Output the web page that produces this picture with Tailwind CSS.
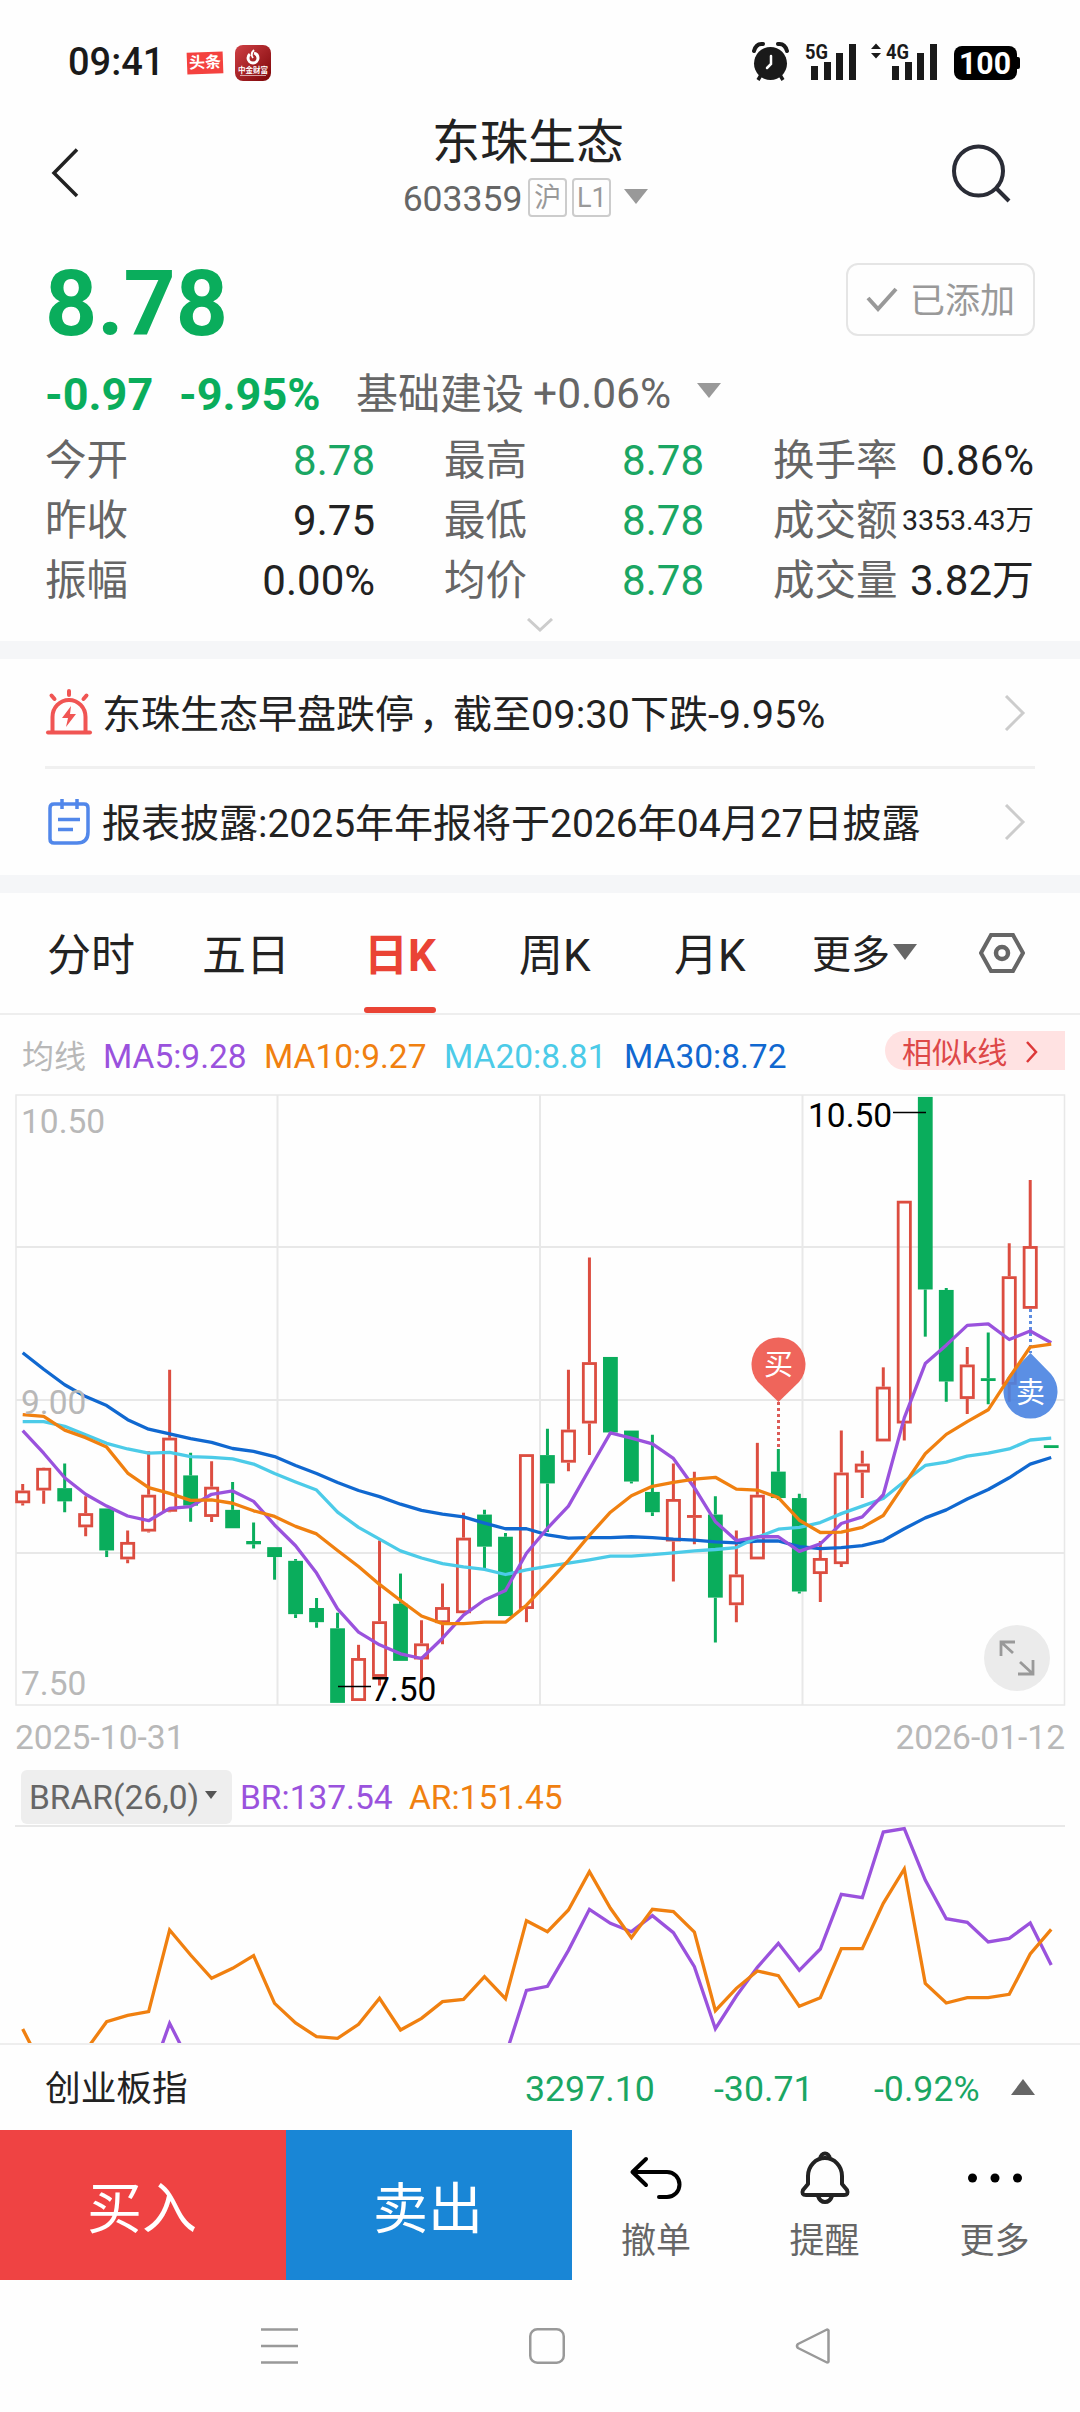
<!DOCTYPE html>
<html lang="zh-CN">
<head>
    <meta charset="UTF-8">
    <meta name="viewport" content="width=device-width, initial-scale=1.0">
    <title>东珠生态 603359</title>
    <script src="https://cdn.jsdelivr.net/npm/@tailwindcss/browser@4"></script>
</head>
<body class="bg-[#fefefe] font-['Roboto','Noto_Sans_CJK_SC',sans-serif] text-[#222]">
<div class="w-[1080px] h-[2412px] overflow-hidden flex flex-col whitespace-nowrap">

    <!-- Status bar -->
    <div class="h-[112px] shrink-0 pt-[14px] pl-[68px] pr-[60px] flex items-center justify-between">
        <div class="flex items-center">
            <span class="text-[38px] font-medium leading-none w-[119px] -mt-[2px] text-[#1a1a1a]">09:41</span>
            <span class="w-[36px] h-[22px] bg-[#f4423f] text-white text-[16px] font-bold leading-[22px] text-center -rotate-2">头条</span>
            <svg class="ml-[12px]" width="36" height="36" viewBox="0 0 36 36">
                <defs>
                    <linearGradient id="appBg" x1="0" y1="0" x2="1" y2="1">
                        <stop offset="0" stop-color="#d04045"/>
                        <stop offset="1" stop-color="#7c0508"/>
                    </linearGradient>
                </defs>
                <rect width="36" height="36" rx="8" fill="url(#appBg)"/>
                <circle cx="18" cy="13" r="5" fill="none" stroke="#fff" stroke-width="3" stroke-dasharray="27 4.400" stroke-dashoffset="-24"/>
                <path d="M19 5q-4 4-1 8" fill="none" stroke="#fff" stroke-width="1.800"/>
                <text x="18" y="27.500" font-size="7.500" font-weight="700" fill="#fff" text-anchor="middle">中金财富</text>
                <path d="M5 30.500h26" stroke="#fff" stroke-opacity=".6"/>
            </svg>
        </div>
        <svg width="270" height="44" viewBox="750 41 270 44" fill="#1a1a1a">
            <!-- alarm -->
            <circle cx="770.500" cy="63.500" r="16.500"/>
            <path d="M754 51q2-8 9-7M787 51q-2-8-9-7" fill="none" stroke="#1a1a1a" stroke-width="4" stroke-linecap="round"/>
            <path d="M761 75l-3 5M780 75l3 5" stroke="#1a1a1a" stroke-width="3.500"/>
            <path d="M771 56v8l-4 4" fill="none" stroke="#fff" stroke-width="2.500" stroke-linecap="round"/>
            <!-- signal -->
            <text x="805" y="59" font-size="21" font-weight="700" textLength="23" lengthAdjust="spacingAndGlyphs">5G</text>
            <path d="M811 66h7v14h-7zM824 62h7v18h-7zM836 53h7v27h-7zM849 44h7v36h-7z"/>
            <path d="M876 43.500l5 5.500h-10zM876 58.500l5-5.500h-10z"/>
            <text x="886" y="59" font-size="21" font-weight="700" textLength="23" lengthAdjust="spacingAndGlyphs">4G</text>
            <path d="M892 66h7v14h-7zM905 62h7v18h-7zM917 53h7v27h-7zM930 44h7v36h-7z"/>
            <!-- battery -->
            <rect x="954" y="46" width="63" height="34" rx="8" fill="#000"/>
            <rect x="1014" y="57" width="6" height="12" rx="2" fill="#000"/>
            <text x="985" y="74" font-size="31" font-weight="700" fill="#fff" text-anchor="middle" textLength="52" lengthAdjust="spacingAndGlyphs">100</text>
        </svg>
    </div>

    <!-- Title -->
    <div class="h-[112px] shrink-0 flex justify-between px-[46px]">
        <svg class="mt-[35px]" width="60" height="52" viewBox="46 147 60 52" fill="none" stroke="#222" stroke-width="3.500">
            <path d="M77 149.500L54 173l23 23"/>
        </svg>
        <div class="flex flex-col items-center pr-[5px]">
            <div class="text-[48px] leading-[60px] pl-[5px] pt-px">东珠生态</div>
            <div class="flex items-center h-[51px] text-[35.5px] text-[#666]">
                <span class="pt-[2px]">603359</span>
                <span class="ml-[6px] w-[39px] h-[39px] -mt-[2px] rounded border-2 border-[#ccc] text-[27px] leading-[36px] text-center text-[#999]">沪</span>
                <span class="ml-[5px] w-[39px] h-[39px] -mt-[2px] rounded border-2 border-[#ccc] text-[27px] leading-[36px] text-center text-[#999]">L1</span>
                <svg class="ml-[13px] -mt-[5px]" width="24" height="15" viewBox="0 0 24 15"><path d="M0 0h24L12 15z" fill="#999"/></svg>
            </div>
        </div>
        <svg class="mt-[28px]" width="84" height="64" viewBox="950 140 84 64" fill="none" stroke="#2a2c36" stroke-width="4">
            <circle cx="978.500" cy="171" r="24.500"/>
            <path d="M997 189l12 12"/>
        </svg>
    </div>

    <!-- Price -->
    <div class="h-[150px] shrink-0 pl-[45px] pr-[45px] flex items-center justify-between">
        <div class="text-[91px] leading-none font-bold text-[#0aad5c] pt-[11px]">8.78</div>
        <div class="w-[189px] h-[73px] rounded-xl border-2 border-[#e5e5e5] flex items-center justify-center text-[35px] text-[#999]">
            <svg class="mr-[12px] mt-[2px]" width="32" height="26" viewBox="0 0 32 26"><path d="M2 11l10 11L30 2" fill="none" stroke="#999" stroke-width="4"/></svg>
            <span class="pt-[7px]">已添加</span>
        </div>
    </div>
    <div class="h-[51px] shrink-0 pl-[45px] pt-[3px] flex items-center text-[45px] leading-none text-[#0aad5c] mt-[-7px]">
        <span class="font-bold w-[134px]">-0.97</span>
        <span class="font-bold w-[177px]">-9.95%</span>
        <span class="text-[42px] text-[#666] pt-px">基础建设</span>
        <span class="text-[42.5px] text-[#666] ml-[9px] pt-px">+0.06%</span>
        <svg class="ml-[26px] -mt-[8px]" width="24" height="15" viewBox="0 0 24 15"><path d="M0 0h24L12 15z" fill="#999"/></svg>
    </div>

    <!-- Quote details -->
    <div class="mt-[13px] h-[178px] shrink-0 pl-[45px] grid grid-cols-[330px_260px_261px] gap-x-[69px] text-[41.5px] leading-[60px] text-[#666]">
        <div class="flex justify-between"><span>今开</span><span class="text-[#1aa663] text-[42px]">8.78</span></div>
        <div class="flex justify-between"><span>最高</span><span class="text-[#1aa663] text-[42px]">8.78</span></div>
        <div class="flex justify-between"><span>换手率</span><span class="text-[#222] text-[42px]">0.86%</span></div>
        <div class="flex justify-between"><span>昨收</span><span class="text-[#222] text-[42px]">9.75</span></div>
        <div class="flex justify-between"><span>最低</span><span class="text-[#1aa663] text-[42px]">8.78</span></div>
        <div class="flex justify-between"><span>成交额</span><span class="text-[#222] text-[28.5px]">3353.43万</span></div>
        <div class="flex justify-between"><span>振幅</span><span class="text-[#222] text-[42px]">0.00%</span></div>
        <div class="flex justify-between"><span>均价</span><span class="text-[#1aa663] text-[42px]">8.78</span></div>
        <div class="flex justify-between"><span>成交量</span><span class="text-[#222] text-[42px]">3.82万</span></div>
    </div>
    <div class="h-[32px] shrink-0 flex items-center justify-center">
        <svg width="28" height="14" viewBox="0 0 28 14"><path d="M2 1l12 11L26 1" fill="none" stroke="#ccc" stroke-width="3"/></svg>
    </div>

    <!-- News -->
    <div class="h-[18px] shrink-0 bg-[#f5f6f8]"></div>
    <div class="px-[45px] shrink-0 text-[39px]">
        <div class="h-[110px] border-b-3 border-[#f0f0f0] flex items-center">
            <svg width="48" height="48" viewBox="0 0 48 48" fill="none" stroke="#f05553" stroke-width="4" stroke-linecap="round">
                <path d="M3 43.500h42"/>
                <path d="M7.500 42V28a16.500 17 0 0 1 33 0v14"/>
                <path d="M24 2v4M6.500 6.500l3 3.500M41.500 6.500l-3 3.500"/>
                <path d="M26 17l-9 12h6l-2 9 10-13h-6z" fill="#f05553" stroke="none"/>
            </svg>
            <span class="ml-[9px] pt-[5px]">东珠生态早盘跌停<span class="pl-[5px] -mr-[5px]">，</span>截至<span class="text-[39.7px]">09:30</span>下跌<span class="text-[39.7px]">-9.95%</span></span>
            <svg class="ml-auto mr-[9px]" width="22" height="36" viewBox="0 0 22 36"><path d="M2 1l17 17L2 35" fill="none" stroke="#ccc" stroke-width="3"/></svg>
        </div>
        <div class="h-[106px] flex items-center">
            <svg width="48" height="48" viewBox="0 0 48 48" fill="none" stroke="#5187ea" stroke-width="3.500">
                <path d="M9 6h30q4 0 4 4v24q0 11-11 11H9q-4 0-4-4V10q0-4 4-4z"/>
                <path d="M17 1v10M32 1v10M13 21.500h22M13 31.500h15"/>
            </svg>
            <span class="ml-[9px] pt-[5px]">报表披露:2025年年报将于2026年04月27日披露</span>
            <svg class="ml-auto mr-[9px]" width="22" height="36" viewBox="0 0 22 36"><path d="M2 1l17 17L2 35" fill="none" stroke="#ccc" stroke-width="3"/></svg>
        </div>
    </div>
    <div class="h-[18px] shrink-0 bg-[#f5f6f8]"></div>

    <!-- Period tabs -->
    <div class="h-[122px] shrink-0 border-b-2 border-[#eee] pl-[47px] pr-[55px] flex items-center text-[44px]">
        <div class="w-[155px] pt-[5px]">分时</div>
        <div class="w-[162px] pt-[5px]">五日</div>
        <div class="relative w-[72px] h-full pt-[5px] flex items-center justify-center font-bold text-[#ea4335]">日K
            <span class="absolute bottom-0 left-0 w-[72px] h-[6px] rounded-full bg-[#ea4335]"></span>
        </div>
        <div class="ml-[83px] w-[155px] pt-[5px]">周K</div>
        <div class="w-[138px] pt-[5px]">月K</div>
        <div class="text-[39px] flex items-center pt-[5px]">更多
            <svg class="ml-[3px] -mt-[8px]" width="24" height="16" viewBox="0 0 24 16"><path d="M0 0h24L12 16z" fill="#666"/></svg>
        </div>
        <svg class="ml-auto" width="46" height="40" viewBox="0 0 46 40" fill="none" stroke="#666">
            <path d="M12 2h22l10 18-10 18H12L2 20z" stroke-width="4"/>
            <circle cx="23" cy="20" r="6" stroke-width="4.500"/>
        </svg>
    </div>

    <!-- Moving averages -->
    <div class="h-[79px] shrink-0 pt-[5px] pl-[22px] pr-[15px] flex items-center text-[33.5px]">
        <span class="text-[32px] text-[#b8b8b8] w-[81px]">均线</span>
        <span class="text-[#9a52dd] w-[161px]">MA5:9.28</span>
        <span class="text-[#f08010] w-[180px]">MA10:9.27</span>
        <span class="text-[#4ccbe8] w-[180px]">MA20:8.81</span>
        <span class="text-[#1068d0]">MA30:8.72</span>
        <span class="ml-auto -mt-[13px] w-[180px] h-[39px] pl-[17px] pr-[27px] rounded-l-full bg-[#ffe2e2] text-[#dd4848] text-[30px] leading-[39px] flex items-center justify-between">
            <span class="pt-[3px]">相似k线</span>
            <svg class="mt-[3px]" width="13" height="24" viewBox="0 0 13 24"><path d="M2 2l9 10L2 22" fill="none" stroke="#dd3838" stroke-width="2.500"/></svg>
        </span>
    </div>

    <!-- Candles -->
    <svg class="block shrink-0" width="1080" height="612" viewBox="0 0 1080 612">
        <g fill="none" stroke="#e8e8e8" stroke-width="2">
            <path d="M16 1h1048.500v610H16z" stroke-width="1.500"/>
            <path d="M16 153h1048M16 306h1048M16 459h1048M277.500 1v610M540 1v610M802.500 1v610"/>
        </g>
        <g id="candles"></g>
        <!-- trade pins -->
        <g opacity=".9">
            <path d="M778.500 308v46" stroke="#d94a45" stroke-width="3" stroke-dasharray="3 3"/>
            <path d="M778.500 308L758 288a27 27 0 1 1 41 0z" fill="#ee554a"/>
            <path d="M1030.500 215v44" stroke="#4a80dd" stroke-width="3" stroke-dasharray="3 3"/>
            <path d="M1030.500 259L1010 280a27 27 0 1 0 41 0z" fill="#4a84e2"/>
        </g>
        <g fill="#fff" font-size="29" text-anchor="middle">
            <text x="778.500" y="281">买</text>
            <text x="1030.500" y="309">卖</text>
        </g>
        <g id="averages" fill="none" stroke-width="3.300" stroke-linejoin="round"></g>
        <g fill="#b8b8b8" font-size="33.500">
            <text x="21" y="38.500">10.50</text>
            <text x="21" y="319.500">9.00</text>
            <text x="21" y="600.500">7.50</text>
        </g>
        <g fill="#000" font-size="33.500">
            <text x="808" y="32.500">10.50</text>
            <text x="371" y="606.500">7.50</text>
            <path d="M893 18.500h33M338 592.500h33" stroke="#000" stroke-width="1.500"/>
        </g>
        <circle cx="1017" cy="564" r="33" fill="#ebebeb"/>
        <path d="M1015 548h-14v14M1001 548l12 11M1018 580h15v-14M1033 580l-13-12" fill="none" stroke="#999" stroke-width="2.800"/>
    </svg>
    <div class="h-[62px] shrink-0 px-[15px] pt-[3px] flex items-center justify-between text-[33.6px] text-[#b8b8b8]">
        <span>2025-10-31</span><span>2026-01-12</span>
    </div>

    <!-- BRAR indicator -->
    <div class="h-[57px] shrink-0 pl-[21px] flex items-center text-[33.5px]">
        <div class="w-[211px] h-[54px] rounded-md bg-[#eee] text-[#666] pl-[8px] pt-[3px] flex items-center">BRAR(26,0)
            <svg class="ml-[6px] -mt-[6px]" width="12" height="8" viewBox="0 0 12 8"><path d="M0 0h12L6 8z" fill="#555"/></svg>
        </div>
        <span class="ml-[8px] w-[169px] pt-[3px] text-[#9a52dd]">BR:137.54</span>
        <span class="pt-[3px] text-[#f08010]">AR:151.45</span>
    </div>
    <svg class="block shrink-0 border-b-2 border-[#eee]" width="1080" height="220" viewBox="0 0 1080 218">
        <path d="M15 1h1050" stroke="#e8e8e8" stroke-width="2"/>
        <g id="brar" fill="none" stroke-width="3.300"></g>
    </svg>

    <!-- Index ticker -->
    <div class="h-[85px] shrink-0 pl-[45px] pr-[45px] pt-[5px] flex items-center text-[35.7px] text-[#1aa663]">
        <span class="text-[#222] w-[480px]">创业板指</span>
        <span class="w-[189px]">3297.10</span>
        <span class="w-[160px]">-30.71</span>
        <span>-0.92%</span>
        <svg class="ml-auto -mt-[7px]" width="24" height="16" viewBox="0 0 24 16"><path d="M0 16h24L12 0z" fill="#666"/></svg>
    </div>

    <!-- Actions -->
    <div class="h-[150px] shrink-0 flex text-[35px] text-[#666]">
        <button class="w-[286px] bg-[#ef4343] text-white text-[55px] pt-[8px] pr-[2px]">买入</button>
        <button class="w-[286px] bg-[#1986d6] text-white text-[55px] pt-[8px] pr-[2px]">卖出</button>
        <div class="w-[168px] flex flex-col items-center">
            <svg class="mt-[20px]" width="56" height="60" viewBox="0 0 56 60" fill="none" stroke="#000" stroke-width="4" stroke-linecap="round" stroke-linejoin="round">
                <path d="M18 9L4.500 22 18 35M5 22h34a12.500 12.500 0 0 1 0 25h-8"/>
            </svg>
            <span class="leading-[63px]">撤单</span>
        </div>
        <div class="w-[169px] flex flex-col items-center">
            <svg class="mt-[20px]" width="56" height="60" viewBox="0 0 56 60" fill="none" stroke="#222" stroke-width="4" stroke-linejoin="round">
                <path d="M11 26a17 18 0 0 1 34 0v8l5 6q2 5-3 5H9q-5 0-3-5l5-6z"/>
                <path d="M23.500 8a4.500 4.500 0 0 1 9 0M21 46q2 6 7 6t7-6"/>
            </svg>
            <span class="leading-[63px]">提醒</span>
        </div>
        <div class="w-[171px] flex flex-col items-center">
            <svg class="mt-[20px]" width="56" height="60" viewBox="0 0 56 60"><circle cx="5.500" cy="28" r="4.500"/><circle cx="28" cy="28" r="4.500"/><circle cx="50.500" cy="28" r="4.500"/></svg>
            <span class="leading-[63px]">更多</span>
        </div>
    </div>

    <!-- System navigation -->
    <div class="h-[132px] shrink-0 pl-[261px] pr-[249px] flex items-center justify-between">
        <svg width="37" height="36" viewBox="0 0 37 36" stroke="#999" stroke-width="2.500"><path d="M0 1.500h37M0 18h37M0 34.500h37"/></svg>
        <svg width="36" height="36" viewBox="0 0 36 36" fill="none" stroke="#999" stroke-width="2.500"><rect x="1.250" y="1.250" width="33.500" height="33.500" rx="7"/></svg>
        <svg width="36" height="36" viewBox="0 0 36 36" fill="none" stroke="#999" stroke-width="2.500" stroke-linejoin="round"><path d="M33.500 2.500v31Q33 35 31 34L3 20q-2-2 0-4L31 2q2-1 2.500.5z"/></svg>
    </div>
</div>

<script>
    // [direction, high, body top, body bottom, low] in chart units
    const candles = [
        ["r",983,997,1024,1029],["r",948,949,997,1025],["g",940,992,1020,1043],["r",1009,1045,1075,1094],["g",1035,1035,1124,1138],
        ["r",1082,1106,1143,1151],["r",914,1006,1084,1086],["r",741,885,1042,1043],["g",917,965,1029,1063],["r",935,989,1053,1064],
        ["g",979,1038,1077,1077],["g",1065,1104,1111,1120],["g",1117,1117,1138,1186],["g",1142,1146,1259,1267],["g",1225,1246,1276,1288],
        ["g",1256,1289,1447,1447],["r",1324,1352,1443,1443],["r",1103,1274,1392,1410],["g",1173,1237,1358,1358],["r",1272,1321,1355,1400],
        ["r",1194,1244,1278,1323],["r",1044,1097,1257,1257],["g",1038,1048,1116,1164],["g",1087,1095,1263,1263],["r",920,920,1248,1276],
        ["g",866,922,982,1085],["r",741,868,938,956],["r",503,725,855,922],["g",714,714,874,874],["g",870,870,978,982],
        ["g",879,1000,1043,1051],["r",940,1015,1105,1190],["r",957,1049,1055,1111],["g",1009,1048,1224,1319],["r",1082,1175,1240,1276],
        ["r",896,1006,1143,1143],["g",909,957,1013,1017],["g",1004,1013,1211,1215],["r",1104,1140,1174,1233],["r",870,959,1153,1159],
        ["r",913,940,959,1013],["r",736,777,893,893],["r",383,383,855,891],["g",163,163,571,671],["g",568,572,766,809],
        ["r",693,730,803,835],["g",662,759,765,814],["r",473,543,773,809],["r",339,479,612,612],["g",901,901,907,907]
    ];

    const averages = [
        { color: "#1068d0", points: [705,740,773,798,817,847,867,877,887,895,908,914,925,944,961,980,997,1010,1026,1039,1047,1053,1066,1078,1078,1091,1098,1097,1097,1095,1097,1100,1102,1106,1108,1104,1104,1116,1120,1118,1114,1103,1078,1055,1038,1015,995,970,941,927] },
        { color: "#4ccbe8", points: [851,851,861,879,897,909,918,916,925,927,930,941,961,979,996,1043,1075,1100,1125,1140,1152,1159,1164,1175,1165,1158,1151,1144,1136,1136,1133,1129,1125,1122,1118,1096,1079,1075,1065,1046,1030,1014,978,944,937,924,918,909,890,886] },
        { color: "#9a52dd", points: [870,918,970,1005,1030,1051,1061,1035,1031,1005,998,1020,1070,1114,1172,1248,1297,1324,1343,1353,1310,1261,1229,1209,1130,1077,1030,952,875,886,898,929,991,1063,1103,1095,1095,1126,1110,1067,1053,1006,843,728,689,647,644,677,659,684] },
        { color: "#f08010", points: [836,840,869,885,905,960,991,1003,1018,1017,1024,1040,1052,1073,1089,1124,1158,1196,1230,1263,1279,1279,1276,1276,1240,1193,1145,1092,1043,1008,988,980,973,969,994,996,1012,1060,1086,1085,1075,1050,984,919,878,851,826,758,693,687] }
    ];

    const brar = [
        { color: "#9a52dd", points: [1200,1200,1200,1200,1200,1147,1147,970,1094,1200,1200,1200,1200,1200,1200,1200,1200,1200,1200,1200,1200,1200,1200,1067,871,859,751,628,670,695,647,698,800,986,888,802,730,811,747,583,593,396,386,540,656,667,726,715,669,795] },
        { color: "#f08010", points: [987,1110,1100,1052,965,946,935,690,765,835,805,767,910,969,1010,1015,973,895,990,955,905,898,830,896,662,695,630,515,625,713,628,635,696,932,865,813,827,919,893,746,746,610,507,850,909,893,893,883,762,688] }
    ];

    const x = i => 22.7 + i * 20.99;
    const y = v => v / 2.119 - 74;

    document.getElementById("candles").innerHTML = candles.map(([dir, high, top, bottom, low], i) => {
        const color = dir === "r" ? "#dc4d40" : "#0aad5c";
        const h = y(bottom) - y(top);
        // hollow body when rising, solid when falling
        const body = dir === "r" && h > 4
            ? `<rect x="${x(i) - 6.1}" y="${y(top) + 1.4}" width="12.2" height="${h - 2.8}" fill="none" stroke="${color}" stroke-width="2.8"/>`
            : `<rect x="${x(i) - 7.4}" y="${y(top)}" width="14.8" height="${h}" fill="${color}"/>`;
        return `<path d="M${x(i)} ${y(high)}V${y(top)}M${x(i)} ${y(bottom)}V${y(low)}" stroke="${color}" stroke-width="3"/>${body}`;
    }).join("");

    function drawLines(id, series, scale) {
        document.getElementById(id).innerHTML = series.map(s =>
            `<polyline stroke="${s.color}" points="${s.points.map((v, i) => x(i) + "," + scale(v)).join(" ")}"/>`
        ).join("");
    }

    drawLines("averages", averages, y);
    drawLines("brar", brar, v => v / 3 - 125);
</script>
</body>
</html>
